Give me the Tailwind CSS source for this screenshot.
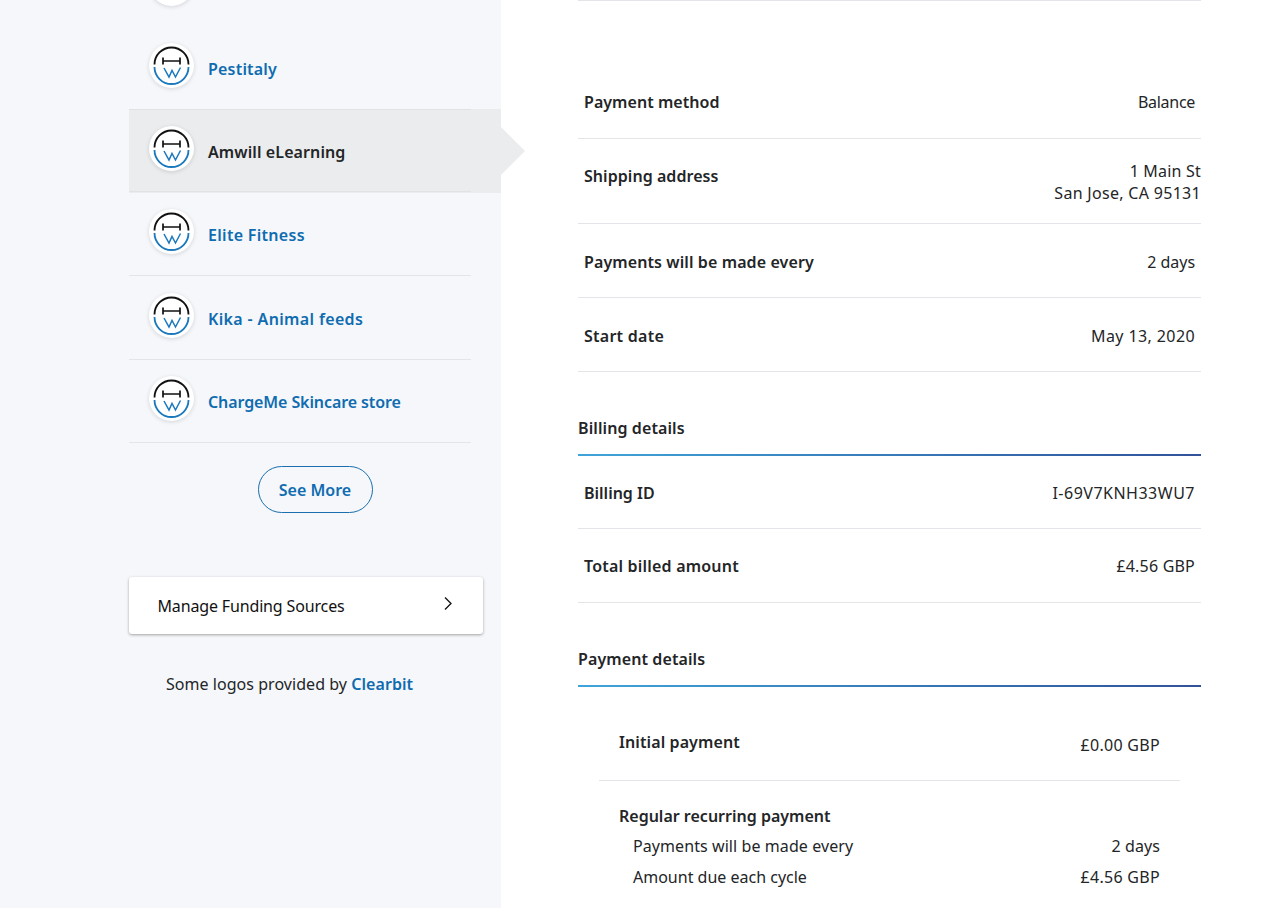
<!DOCTYPE html>
<html>
<head>
<meta charset="utf-8">
<script src="https://cdn.jsdelivr.net/npm/@tailwindcss/browser@4"></script>
</head>
<body class="bg-white">
<svg class="hidden"><defs>
<symbol id="logo" viewBox="-22.5 -22.5 45 45">
<path d="M-17 -1A17 17 0 0 1 17 -1" fill="none" stroke="#111" stroke-width="1.8"/>
<path d="M-17 1.500A17 17 0 0 0 17 1.500" fill="none" stroke="#1a78bd" stroke-width="1.800"/>
<path d="M-8.500 -8V-1M8.500 -8V-1M-8.500 -4.500H8.500" fill="none" stroke="#111" stroke-width="1.700"/>
<path d="M-7.500 2.500L-2.500 11.500L0.500 5L4 11.500L9 2" fill="none" stroke="#1a78bd" stroke-width="1.500"/>
</symbol>
</defs></svg>
<div class="h-[908px] w-[1280px] overflow-hidden flex font-['Noto_Sans',sans-serif] text-[#232527] text-[16px] leading-[22px]">
  <aside class="w-[501px] h-full bg-[#f5f7fa] pl-[129px] shrink-0 relative z-10">
    <div class="w-[342px] -mt-[56px]">
      <div class="h-[83px] pt-[17px] pl-[20px]"><div class="w-[45px] h-[45px] rounded-full bg-white shadow-[0_1px_4px_rgba(0,0,0,0.14)]"></div></div>
      <div class="h-[83px] pl-[20px] flex items-center gap-[14px] border-b border-[#e3e5e8]">
        <div class="w-[45px] h-[45px] rounded-full bg-white shadow-[0_1px_4px_rgba(0,0,0,0.14)] -mt-[5px]"><svg class="w-[45px] h-[45px]"><use href="#logo"/></svg></div>
        <span class="pt-[2px] font-semibold tracking-[0.2px] text-[#0f6cb0]">Pestitaly</span>
      </div>
      <div class="h-[84px] -mt-px w-[372px] pl-[20px] flex items-center gap-[14px] bg-[#ebeced] relative">
        <div class="absolute left-0 top-0 w-[342px] h-px bg-[#dfe3e6]"></div>
        <div class="absolute left-0 bottom-px w-[342px] h-px bg-[#dfe3e6]"></div>
        <div class="w-[45px] h-[45px] rounded-full bg-white shadow-[0_1px_4px_rgba(0,0,0,0.14)] -mt-[5px]"><svg class="w-[45px] h-[45px]"><use href="#logo"/></svg></div>
        <span class="pt-[2px] font-semibold tracking-[0.1px] text-[#232527]">Amwill eLearning</span>
        <svg class="absolute left-full top-[18px] w-[24px] h-[48px]" viewBox="0 0 24 48"><path d="M0 0L24 24L0 48Z" fill="#ebeced"/></svg>
      </div>
      <div class="h-[83px] pl-[20px] flex items-center gap-[14px] border-b border-[#e3e5e8]">
        <div class="w-[45px] h-[45px] rounded-full bg-white shadow-[0_1px_4px_rgba(0,0,0,0.14)] -mt-[5px]"><svg class="w-[45px] h-[45px]"><use href="#logo"/></svg></div>
        <span class="pt-[2px] font-semibold tracking-[0.3px] text-[#0f6cb0]">Elite Fitness</span>
      </div>
      <div class="h-[84px] pl-[20px] flex items-center gap-[14px] border-b border-[#e3e5e8]">
        <div class="w-[45px] h-[45px] rounded-full bg-white shadow-[0_1px_4px_rgba(0,0,0,0.14)] -mt-[5px]"><svg class="w-[45px] h-[45px]"><use href="#logo"/></svg></div>
        <span class="pt-[2px] font-semibold tracking-[0.35px] text-[#0f6cb0]">Kika - Animal feeds</span>
      </div>
      <div class="h-[83px] pl-[20px] flex items-center gap-[14px] border-b border-[#e3e5e8]">
        <div class="w-[45px] h-[45px] rounded-full bg-white shadow-[0_1px_4px_rgba(0,0,0,0.14)] -mt-[5px]"><svg class="w-[45px] h-[45px]"><use href="#logo"/></svg></div>
        <span class="pt-[2px] font-semibold tracking-[-0.1px] text-[#0f6cb0]">ChargeMe Skincare store</span>
      </div>
      <div class="flex justify-center mt-[23px] w-[372px]">
        <div class="w-[115px] h-[47px] rounded-full border border-[#1a6fae] flex items-center justify-center font-semibold text-[#0f6cb0]">See More</div>
      </div>
    </div>
    <div class="w-[354px] h-[57px] mt-[64px] bg-white rounded-[3px] shadow-[0_1px_3px_rgba(0,0,0,0.35)] flex items-center justify-between pl-[28.5px] pr-[31px] text-[#111]">
      <span class="tracking-[-0.15px]">Manage Funding Sources</span>
      <svg class="w-[8px] h-[13px] -mt-[4px]" viewBox="0 0 8 13"><path d="M1 0.500L7 6.500L1 12.500" fill="none" stroke="#111" stroke-width="1.300"/></svg>
    </div>
    <div class="w-[321px] text-center mt-[39px] tracking-[0.05px]">Some logos provided by <span class="font-semibold text-[#0f6cb0]">Clearbit</span></div>
  </aside>
  <main class="ml-[77px] w-[623px]">
    <div class="h-px bg-[#e3e5e8]"></div>
    <div class="h-[138px] px-[6px] pb-[25px] flex items-end justify-between border-b border-[#e3e5e8]"><span class="font-semibold tracking-[0.05px]">Payment method</span><span class="tracking-[-0.3px]">Balance</span></div>
    <div class="h-[85px] pl-[6px] pt-[26px] flex justify-between border-b border-[#e3e5e8]"><span class="font-semibold tracking-[0.05px]">Shipping address</span><span class="text-right -mt-[5px] tracking-[0.3px]"><span class="tracking-[0.2px]">1 Main St</span><br>San Jose, CA 95131</span></div>
    <div class="h-[74px] px-[6px] pt-[2px] flex items-center justify-between border-b border-[#e3e5e8]"><span class="font-semibold tracking-[0.1px]">Payments will be made every</span><span class="tracking-[-0.05px]">2 days</span></div>
    <div class="h-[74px] px-[6px] pt-[2px] flex items-center justify-between border-b border-[#e3e5e8]"><span class="font-semibold tracking-[0.25px]">Start date</span><span class="tracking-[0.4px]">May 13, 2020</span></div>
    <div class="h-[82px] flex items-end pb-[15px] font-semibold tracking-[0.1px]">Billing details</div>
    <div class="h-[2px] bg-linear-to-r from-[#2a9ad6]/90 to-[#1b3f8f]/90"></div>
    <div class="h-[73px] px-[6px] pt-[2px] flex items-center justify-between border-b border-[#e3e5e8]"><span class="font-semibold">Billing ID</span><span class="tracking-[0.5px]">I-69V7KNH33WU7</span></div>
    <div class="h-[74px] px-[6px] flex items-center justify-between border-b border-[#e3e5e8]"><span class="font-semibold tracking-[0.2px]">Total billed amount</span><span class="tracking-[0.2px]">£4.56 GBP</span></div>
    <div class="h-[82px] flex items-end pb-[15px] font-semibold tracking-[0.1px]">Payment details</div>
    <div class="h-[2px] bg-linear-to-r from-[#2a9ad6]/90 to-[#1b3f8f]/90"></div>
    <div class="mx-[21px] h-[94px] px-[20px] pt-[44px] flex justify-between border-b border-[#e3e5e8]"><span class="font-semibold tracking-[0.1px]">Initial payment</span><span class="mt-[3px] tracking-[0.3px]">£0.00 GBP</span></div>
    <div class="mx-[21px] px-[20px] pt-[24px]">
      <div class="font-semibold">Regular recurring payment</div>
      <div class="flex justify-between pl-[14px] mt-[8px]"><span class="tracking-[0.08px]">Payments will be made every</span><span class="tracking-[0.1px]">2 days</span></div>
      <div class="flex justify-between pl-[14px] mt-[9px]"><span>Amount due each cycle</span><span class="tracking-[0.3px]">£4.56 GBP</span></div>
    </div>
  </main>
</div>
</body>
</html>
